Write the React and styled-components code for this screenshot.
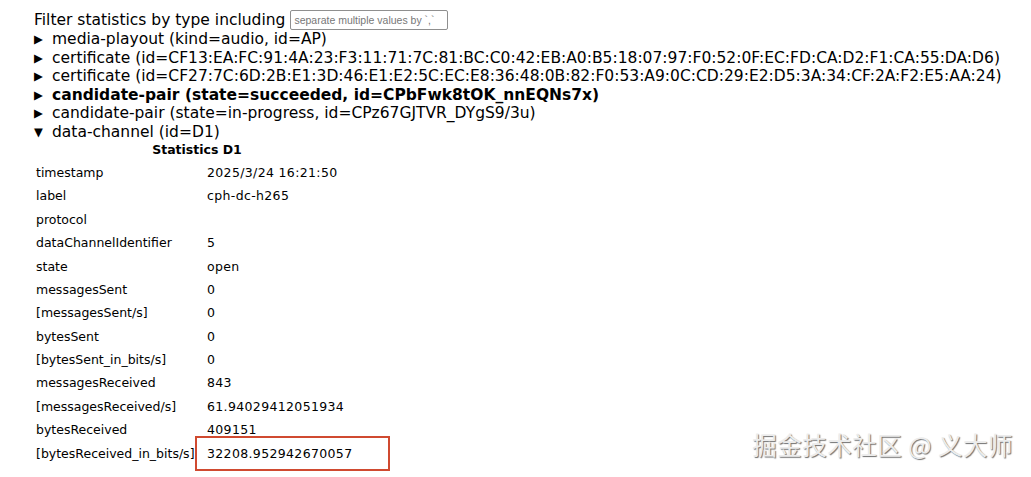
import React from 'react';
import styled, { createGlobalStyle } from 'styled-components';

const GlobalStyle = createGlobalStyle`
  html, body {
    margin: 0;
    background: #fff;
  }
  body {
    font-family: "DejaVu Sans", "Liberation Sans", sans-serif;
    color: #000;
  }
`;

const Page = styled.div`
  position: relative;
  width: 1031px;
  height: 477px;
  overflow: hidden;
  padding: 9px 0 0 34px;
  box-sizing: border-box;
`;

const FilterRow = styled.div`
  display: flex;
  align-items: center;
  gap: 5px;
  font-size: 15.5px;
  height: 21px;
`;

const FilterInput = styled.input`
  width: 158px;
  height: 20px;
  box-sizing: border-box;
  border: 1px solid #8f8f8f;
  border-radius: 2px;
  padding: 0 3px;
  font-family: "Liberation Sans", Arial, sans-serif;
  font-size: 10.5px;
  &::placeholder {
    color: #777;
  }
`;

const Group = styled.details`
  font-size: 15.5px;
  line-height: 18.5px;
`;

const Summary = styled.summary`
  list-style: none;
  display: flex;
  gap: 7px;
  cursor: pointer;
  white-space: nowrap;
  font-weight: ${(p) => (p.$bold ? 'bold' : 'normal')};
  &::-webkit-details-marker {
    display: none;
  }
  &::before {
    content: '${(p) => (p.$open ? '▼' : '▶')}';
    font-size: 11.5px;
    width: 11px;
  }
`;

const StatsTable = styled.table`
  border-collapse: collapse;
  margin: 0 0 0 -4px;
  font-size: 12.5px;
  width: 334px;
`;

const Caption = styled.caption`
  font-weight: bold;
  padding: 0 0 2px;
  text-align: center;
`;

const Cell = styled.td`
  padding: 0 6px;
  height: 23.4px;
  vertical-align: middle;
  white-space: nowrap;
  position: relative;
  letter-spacing: ${(p) => (p.$key ? '0' : '0.35px')};
  width: ${(p) => (p.$key ? '159px' : 'auto')};
`;

const Highlight = styled.span`
  position: absolute;
  left: -6px;
  top: -6px;
  width: 195px;
  height: 35px;
  border: 2px solid #d04a30;
  box-sizing: border-box;
  pointer-events: none;
`;

const Watermark = styled.div`
  position: absolute;
  right: 18px;
  bottom: 15px;
  font-family: "Noto Sans CJK SC", "Noto Sans", sans-serif;
  font-size: 24.5px;
  color: #ececec;
  text-shadow: 1px 1px 1px #6f6f6f, -0.5px -0.5px 0 #fff;
  letter-spacing: 0.5px;
`;

const groups = [
  { text: 'media-playout (kind=audio, id=AP)' },
  { text: 'certificate (id=CF13:EA:FC:91:4A:23:F3:11:71:7C:81:BC:C0:42:EB:A0:B5:18:07:97:F0:52:0F:EC:FD:CA:D2:F1:CA:55:DA:D6)' },
  { text: 'certificate (id=CF27:7C:6D:2B:E1:3D:46:E1:E2:5C:EC:E8:36:48:0B:82:F0:53:A9:0C:CD:29:E2:D5:3A:34:CF:2A:F2:E5:AA:24)' },
  { text: 'candidate-pair (state=succeeded, id=CPbFwk8tOK_nnEQNs7x)', bold: true },
  { text: 'candidate-pair (state=in-progress, id=CPz67GJTVR_DYgS9/3u)' },
];

const stats = [
  ['timestamp', '2025/3/24 16:21:50'],
  ['label', 'cph-dc-h265'],
  ['protocol', ''],
  ['dataChannelIdentifier', '5'],
  ['state', 'open'],
  ['messagesSent', '0'],
  ['[messagesSent/s]', '0'],
  ['bytesSent', '0'],
  ['[bytesSent_in_bits/s]', '0'],
  ['messagesReceived', '843'],
  ['[messagesReceived/s]', '61.94029412051934'],
  ['bytesReceived', '409151'],
  ['[bytesReceived_in_bits/s]', '32208.952942670057', true],
];

export default function App() {
  return (
    <Page>
      <GlobalStyle />
      <FilterRow>
        Filter statistics by type including
        <FilterInput placeholder="separate multiple values by `,`" />
      </FilterRow>
      {groups.map((g) => (
        <Group key={g.text}>
          <Summary $bold={g.bold}>{g.text}</Summary>
        </Group>
      ))}
      <Group open>
        <Summary $open>data-channel (id=D1)</Summary>
        <StatsTable>
          <Caption>Statistics D1</Caption>
          <tbody>
            {stats.map(([k, v, marked]) => (
              <tr key={k}>
                <Cell $key>{k}</Cell>
                <Cell>
                  {v}
                  {marked && <Highlight />}
                </Cell>
              </tr>
            ))}
          </tbody>
        </StatsTable>
      </Group>
      <Watermark>掘金技术社区 @ 义大师</Watermark>
    </Page>
  );
}
